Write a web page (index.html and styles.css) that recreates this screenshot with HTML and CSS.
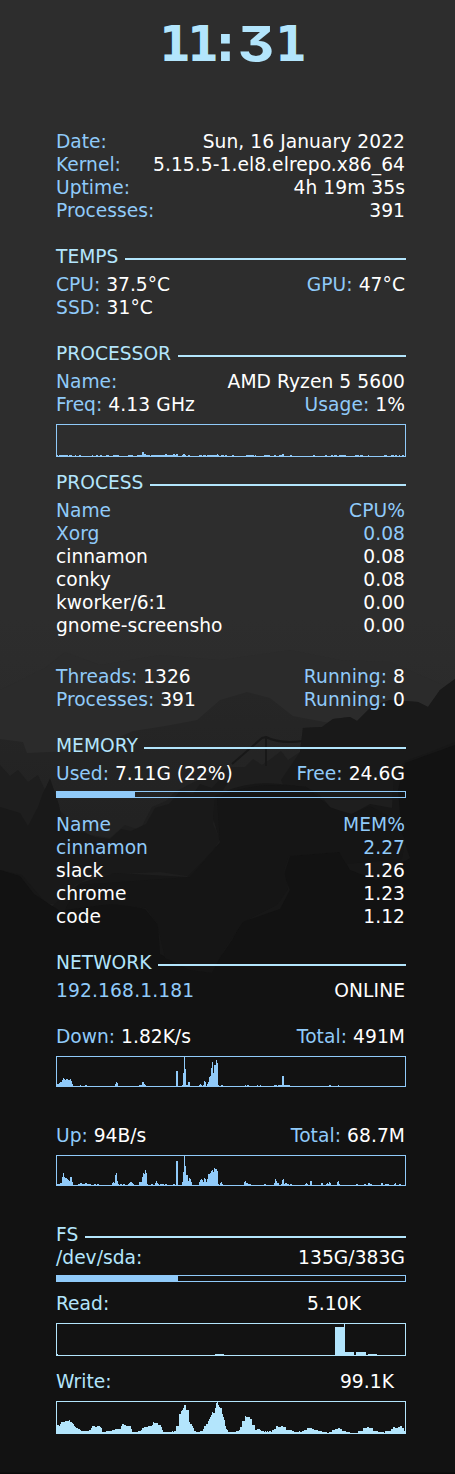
FILE: index.html
```html
<!DOCTYPE html>
<html lang="en">
<head>
<meta charset="utf-8">
<title>System monitor</title>
<link rel="stylesheet" href="styles.css">
</head>
<body>
<svg class="wallpaper" viewBox="0 0 455 1474" aria-hidden="true">
  <defs>
    <linearGradient id="sky" x1="0" y1="0" x2="0" y2="1"><stop offset="0" stop-color="#2d2d2d"/><stop offset=".42" stop-color="#2d2d2d"/><stop offset=".5" stop-color="#2a2a2a"/></linearGradient>
    <linearGradient id="far" x1="0" y1="0" x2="0" y2="1"><stop offset="0" stop-color="#262626"/><stop offset=".5" stop-color="#222"/></linearGradient>
  </defs>
  <rect width="455" height="1474" fill="url(#sky)"/>
  <path fill="#2b2b2b" d="M0 690L45 668 65 652 100 665 160 655 220 660 290 650 340 660 390 662 455 690V900H0z"/>
  <path fill="url(#far)" d="M0 739L23 742 27 753 90 750 133 731 165 726 197 720 220 700 247 692 270 698 293 716 330 723 390 740 455 735V950H0z"/>
  <path fill="#1e1e1e" d="M0 765L10 776 18 770 28 782 38 775 45 790 50 778 60 811 75 825 90 835 110 838 125 825 140 830 152 807 166 801 175 792 190 784 210 775 230 767 245 767 253 759 262 765 272 758 281 751 288 760 300 752 303 728 322 727 333 719 350 717 357 721 372 706 390 700 418 702 428 707 440 690 455 679V1000H0z"/>
  <path fill="none" stroke="#181818" stroke-width="2" d="M232 764L262 738 266 737Q279 744 303 741M266 737V766"/>
  <path fill="#191919" d="M0 807L20 813 28 826 38 807 43 793 50 779 55 793 59 805 62 821 74 829 95 837 110 839 121 829 131 831 146 824 155 808 169 804 180 791 193 794 200 784 212 788 220 779 228 782 217 800 213 824 220 840 210 855 193 877 160 872 95 875 75 885 60 905 20 900 0 880z"/>
  <path fill="#191919" d="M303 728L322 727 333 719 350 717 357 721 372 706 390 700 418 702 428 707 440 690 455 679V800H290L281 780 300 752z"/>
  <path fill="#171717" d="M215 796Q245 780 280 784L306 787Q319 792 330 807L350 815 370 804 392 808 394 773 405 761 425 754 455 742V1000H0V870L22 875 50 908 80 883 115 873 187 877 206 858 220 842 213 818z"/>
  <path fill="#121212" d="M0 870L20 876 34 894 60 911 90 905 120 904 145 909 158 925 160 954 188 969 215 965 232 940 242 922 280 909 290 890 284 875 290 856 340 852 350 870 376 880 410 858 402 835 398 790 405 763 455 745V1474H0z"/>
  <path fill="#151515" d="M217 798Q250 780 306 787L331 808 352 814 370 806 396 820 405 840 402 859 346 864 339 852 289 856 284 870 288 889 277 905 243 922 224 950 212 973 190 970 165 958 157 923 146 908 110 904 65 910 78 885 190 877 220 843z"/>
  <rect y="1472.5" width="455" height="1.5" fill="#0a0a0a"/>
</svg>
<main class="conky">
  <h1 class="clock" aria-label="11:31"><span class="one">1</span><span class="one">1</span><span class="colon">:</span><span class="three">3</span><span class="one">1</span></h1>

  <section class="block system">
    <div class="row"><span class="key">Date:</span><span>Sun, 16 January 2022</span></div>
    <div class="row"><span class="key">Kernel:</span><span>5.15.5-1.el8.elrepo.x86_64</span></div>
    <div class="row"><span class="key">Uptime:</span><span>4h 19m 35s</span></div>
    <div class="row"><span class="key">Processes:</span><span>391</span></div>
  </section>

  <section class="block">
    <h2 class="title">TEMPS</h2>
    <div class="row"><span><span class="key">CPU:</span> 37.5°C</span><span><span class="key">GPU:</span> 47°C</span></div>
    <div class="row"><span><span class="key">SSD:</span> 31°C</span></div>
  </section>

  <section class="block cpu">
    <h2 class="title">PROCESSOR</h2>
    <div class="row"><span class="key">Name:</span><span>AMD Ryzen 5 5600</span></div>
    <div class="row"><span><span class="key">Freq:</span> <span class="wide">4.13 GHz</span></span><span><span class="key">Usage:</span> 1%</span></div>
    <svg class="graph tall" data-series="cpu"></svg>
  </section>

  <section class="block">
    <h2 class="title">PROCESS</h2>
    <div class="row key"><span>Name</span><span>CPU%</span></div>
    <div class="row key"><span>Xorg</span><span>0.08</span></div>
    <div class="row"><span>cinnamon</span><span>0.08</span></div>
    <div class="row"><span>conky</span><span>0.08</span></div>
    <div class="row"><span>kworker/6:1</span><span>0.00</span></div>
    <div class="row"><span>gnome-screensho</span><span>0.00</span></div>
    <div class="counts">
      <div class="row"><span><span class="key">Threads:</span> 1326</span><span><span class="key">Running:</span> 8</span></div>
      <div class="row"><span><span class="key">Processes:</span> 391</span><span><span class="key">Running:</span> 0</span></div>
    </div>
  </section>

  <section class="block">
    <h2 class="title">MEMORY</h2>
    <div class="row"><span><span class="key">Used:</span> 7.11G (22%)</span><span><span class="key">Free:</span> 24.6G</span></div>
    <div class="bar memory"><div class="fill" style="width:78px"></div></div>
    <div class="row key"><span>Name</span><span>MEM%</span></div>
    <div class="row key"><span>cinnamon</span><span>2.27</span></div>
    <div class="row"><span>slack</span><span>1.26</span></div>
    <div class="row"><span>chrome</span><span>1.23</span></div>
    <div class="row"><span>code</span><span>1.12</span></div>
  </section>

  <section class="block network">
    <h2 class="title">NETWORK</h2>
    <div class="row address"><span class="key wide">192.168.1.181</span><span>ONLINE</span></div>
    <div class="row"><span><span class="key">Down:</span> 1.82K/s</span><span><span class="key">Total:</span> 491M</span></div>
    <svg class="graph down" data-series="down"></svg>
    <div class="row"><span><span class="key">Up:</span> 94B/s</span><span><span class="key">Total:</span> 68.7M</span></div>
    <svg class="graph up" data-series="up"></svg>
  </section>

  <section class="block disk">
    <h2 class="title tight">FS</h2>
    <div class="row"><span class="accent">/dev/sda:</span><span>135G/383G</span></div>
    <div class="bar storage"><div class="fill" style="width:121px"></div></div>
    <div class="row read"><span class="accent">Read:</span><span>5.10K</span></div>
    <svg class="graph tall light" data-series="read"></svg>
    <div class="row write"><span class="accent">Write:</span><span>99.1K</span></div>
    <svg class="graph tall light" data-series="write"></svg>
  </section>
</main>
<script src="graphs.js"></script>
</body>
</html>
```
FILE: styles.css
```css
* { box-sizing: border-box; }

body {
  margin: 0;
  min-height: 1474px;
  background: #121212;
  color: #fff;
  font: 18.67px/23px "DejaVu Sans", sans-serif;
  position: relative;
}

.wallpaper { position: absolute; inset: 0; width: 455px; height: 1474px; z-index: -1; }

.conky { width: 350px; margin-left: 56px; }

.clock {
  display: flex;
  justify-content: center;
  height: 130px;
  margin: 0;
  padding: 16px 0 0 3px;
  color: #b3e5fc;
  font: bold 49.5px/57px "DejaVu Sans", sans-serif;
}
.clock span { display: flex; justify-content: center; }
.clock .one { width: 28px; transform: scaleX(.91); }
.clock .colon { width: 18px; }
.clock .three {
  width: 42px;
  font-family: Inter, "DejaVu Sans", sans-serif;
  font-feature-settings: "cv09";
  transform: scaleX(1.14);
}

.block { display: flex; flex-direction: column; margin-bottom: 23px; }

.row { display: flex; justify-content: space-between; height: 23px; padding-right: 1px; white-space: pre; }
.row > span:last-child { letter-spacing: .06px; }
.row .wide { letter-spacing: .14px; }
.key { color: #90caf9; }
.accent { color: #b3e5fc; }

.title {
  display: flex;
  gap: 6.5px;
  height: 23px;
  margin: 0 0 5px;
  color: #b3e5fc;
  font-size: inherit;
  font-weight: normal;
}
.title::after { content: ""; flex: 1; height: 2px; margin-top: 13px; background: #b3e5fc; }
.title.tight { margin-bottom: 0; }

.graph { width: 350px; height: 31px; border: 1px solid #90caf9; fill: #90caf9; }
.graph.tall { height: 33px; }
.graph.light { border-color: #b3e5fc; fill: #b3e5fc; }

.cpu { margin-bottom: 14px; }
.cpu .graph { margin-top: 8px; }
.counts { margin-top: 28px; }

.bar { height: 7px; padding: 0; border: 1px solid #90caf9; }
.fill { height: 5px; background: #90caf9; }
.memory { margin: 6px 0 15px; }
.storage { margin: 6px 0 10px; }

.network { margin-bottom: 37px; }
.address { margin-bottom: 23px; }
.down { margin: 8px 0 37px; }
.up { margin-top: 8px; }

.read { margin-bottom: 8px; padding-right: 45px; }
.write { margin: 14px 0 8px; padding-right: 12px; }
.disk { margin-bottom: 0; }
```
FILE: graphs.js
```js
// Bars are "x,width,height"; a missing height means one pixel.
const bars = {
  cpu: "1,1 3,9 13,3 19,1 23,2 36,1 40,2 44,2 50,3 57,6 72,5 81,13 86,2,4 88,2,2 95,27 109,2,2 117,2,2 120,2,2 126,4 127,2,2 132,2 143,3 147,3 151,12 161,1,2 165,3 169,2 176,2 190,8 199,1 208,6 218,2 223,5 226,2,2 234,2 257,2 269,2 275,2 278,3 283,7 299,4 304,3 312,1 328,3 335,3 339,2 343,1 346,2",
  down: "1,2,2 3,1,3 4,2,4 6,1,6 7,1,8 8,1,7 9,1,6 10,2,7 12,2,6 14,1,7 15,1,5 16,1,2 24,1 29,2 59,1,2 60,1,4 61,1,3 83,3 86,2,4 88,1,2 89,1 120,2,15 126,1 127,1,13 128,1,29 129,1,17 130,2 132,2,4 143,1 144,1,2 145,1 147,1 148,1,5 149,1,4 151,1,2 152,1,4 153,1,9 154,1,10 155,1,18 156,1,24 157,1,13 158,2,21 160,1,26 161,1,23 162,1 165,2 189,1 191,2 201,1 204,1 218,3 222,12 226,2,10 273,2 282,1",
  up: "1,3 4,2,2 6,1,8 7,1,12 8,1,8 9,2,7 11,1,6 12,1,5 13,1,4 14,2,8 16,1,3 22,6 24,2,2 28,7 29,2,2 38,2 41,2 56,1,2 57,1,3 58,1,2 59,1,10 60,1,12 61,1,4 62,1 64,2 67,2 72,1 73,1,2 74,2,3 76,1,2 77,1 83,3,3 86,1,8 87,1,12 88,1,11 89,1,15 90,1,12 91,1 95,2 99,1,2 100,1,4 101,1,2 102,1 104,4 109,2 117,2 120,2,24 126,1,3 127,1,13 128,1,29 129,1,19 130,2,10 132,1,4 133,1,7 134,1,6 135,1,3 143,1,3 144,1,5 145,1,6 146,1,5 147,1,3 148,1,7 149,1,6 150,1,3 151,1,6 152,2,11 154,1,12 155,1,14 156,1,15 157,1,13 158,1,17 159,2,16 161,1,14 162,1 164,1,2 165,1,3 166,1 188,1,3 189,1,4 190,2,2 192,3 208,2 218,1,2 219,1,6 220,1,4 221,2,2 225,1 226,1,5 227,1,6 228,1 229,2,2 231,2 234,2 249,3 250,1,2 254,2,4 265,2,2 270,1 271,1,2 272,1 273,1,3 274,1,2 281,1,3 282,1,4 283,1 300,2 308,2 312,2,2 314,2 325,2,2 329,4 338,1 339,1,2 343,2",
  read: "1,1 159,9 279,9,28 288,1,31 289,9,3 300,10,3 312,9"
};

// Continuous profile: "x,height", each height holding until the next x.
const writeProfile = "1,8 3,7 4,9 5,11 9,12 13,13 14,11 16,10 17,9 18,7 19,6 20,5 22,4 24,3 25,2 33,3 35,5 36,7 39,6 41,7 44,6 45,5 46,1 50,2 56,3 59,4 65,7 66,9 68,8 70,7 75,4 76,1 82,2 85,3 86,5 88,6 92,7 96,8 97,11 98,10 102,8 105,6 106,3 107,1 116,2 117,1 118,2 120,7 123,19 125,22 126,23 127,25 128,28 130,23 133,11 134,9 136,7 137,5 138,2 140,1 144,2 147,4 148,7 150,9 152,12 153,14 154,16 155,18 156,21 157,20 159,25 160,30 161,31 162,28 163,26 164,25 166,19 167,16 168,13 169,7 170,4 171,3 172,1 180,2 183,3 184,6 186,12 189,17 190,16 194,14 196,8 199,3 201,4 204,3 205,2 208,1 209,2 210,1 211,2 212,1 213,2 215,1 216,3 218,4 220,7 222,6 225,7 227,6 230,3 236,2 238,1 243,2 244,1 246,2 248,3 251,5 256,4 258,3 262,2 266,1 271,0 273,1 276,3 279,4 282,5 284,4 286,2 290,1 294,0 302,2 307,5 311,6 313,5 317,2 322,1 328,0 329,2 335,4 337,6 339,5 342,6 344,7 346,5 348,2 349,0";

const profile = writeProfile.split(" ").map(p => p.split(",").map(Number));
bars.write = profile.slice(0, -1).map(([x, h], i) => [x, profile[i + 1][0] - x, h].join()).join(" ");

for (const graph of document.querySelectorAll(".graph")) {
  const base = graph.clientHeight || (graph.classList.contains("tall") ? 31 : 29);
  const path = document.createElementNS("http://www.w3.org/2000/svg", "path");
  path.setAttribute("d", bars[graph.dataset.series].split(" ").map(bar => {
    const [x, w, h = 1] = bar.split(",").map(Number);
    return `M${x - 1} ${base}v${-h}h${w}v${h}z`;
  }).join(""));
  graph.append(path);
}
```
